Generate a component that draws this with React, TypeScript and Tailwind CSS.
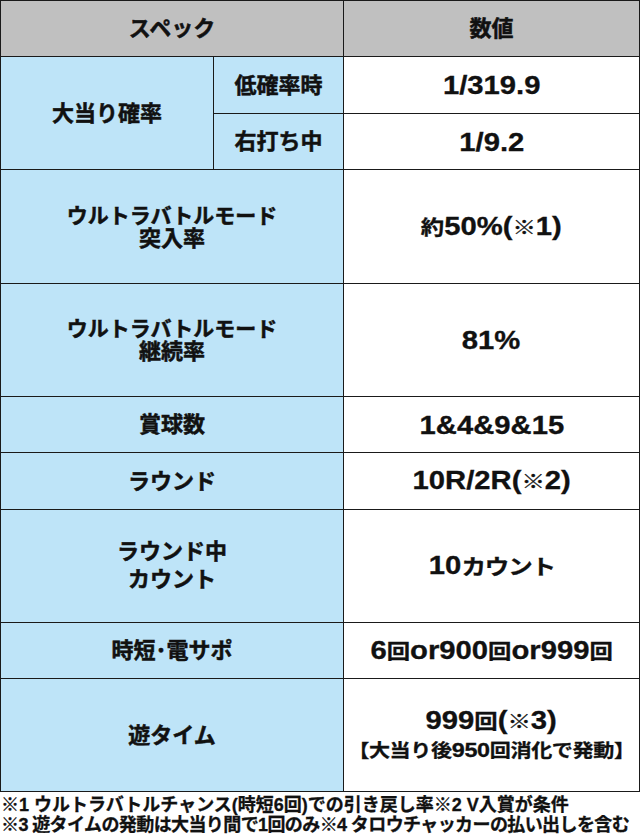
const font = { fontFamily: '"Liberation Sans", "Noto Sans CJK JP", sans-serif' };

const CJK = /[\u3000-\u30ff\u4e00-\u9fff\u203b\uff00-\uffef]/;
const RUNS = /[\u3000-\u30ff\u4e00-\u9fff\u203b\uff00-\uffef]+|[^\u3000-\u30ff\u4e00-\u9fff\u203b\uff00-\uffef]+/g;

// latin digits run large, japanese glyphs a bit smaller, whole line stretched wide like the source image
function Line({ text, cjk = "text-[20px]", className = "" }: { text: string; cjk?: string; className?: string }) {
  const parts = text.match(RUNS) ?? [];
  return (
    <span className={`inline-block scale-x-[1.17] whitespace-nowrap ${className}`}>
      {parts.map((p, i) =>
        CJK.test(p) ? (
          <span key={i} className={cjk}>
            {p}
          </span>
        ) : (
          <span key={i}>{p}</span>
        )
      )}
    </span>
  );
}

function Label({ children, className = "" }: { children: React.ReactNode; className?: string }) {
  return (
    <div
      className={`flex flex-col items-center justify-center bg-[#bee4f8] text-[22px] font-bold leading-[23px] text-[#111] [-webkit-text-stroke:0.5px_#111] ${className}`}
    >
      {children}
    </div>
  );
}

function Value({ children, className = "" }: { children: React.ReactNode; className?: string }) {
  return (
    <div
      className={`flex flex-col items-center justify-center bg-white text-[25px] font-bold leading-[28px] text-[#111] [-webkit-text-stroke:0.3px_#111] ${className}`}
    >
      {children}
    </div>
  );
}

export default function App() {
  return (
    <div className="w-[640px] bg-white" style={font}>
      <div className="grid grid-cols-[212px_129px_295px] grid-rows-[55px_56px_55px_113px_112px_55px_56px_112px_55px_112px] gap-px bg-[#1a1a1a] p-px">
        {/* header */}
        <div className="col-span-2 flex items-center justify-center bg-[#c0c0c0] text-[22px] font-bold text-[#111] [-webkit-text-stroke:0.5px_#111]">
          スペック
        </div>
        <div className="flex items-center justify-center bg-[#c0c0c0] text-[22px] font-bold text-[#111] [-webkit-text-stroke:0.5px_#111]">
          数値
        </div>

        {/* 大当り確率 */}
        <Label className="row-span-2">大当り確率</Label>
        <Label>低確率時</Label>
        <Value>
          <Line text="1/319.9" />
        </Value>
        <Label>右打ち中</Label>
        <Value>
          <Line text="1/9.2" />
        </Value>

        <Label className="col-span-2">
          <span className="text-[21px]">ウルトラバトルモード</span>
          <span>突入率</span>
        </Label>
        <Value>
          <Line text="約50%(※1)" />
        </Value>

        <Label className="col-span-2">
          <span className="text-[21px]">ウルトラバトルモード</span>
          <span>継続率</span>
        </Label>
        <Value>
          <Line text="81%" />
        </Value>

        <Label className="col-span-2">賞球数</Label>
        <Value>
          <Line text="1&4&9&15" />
        </Value>

        <Label className="col-span-2">ラウンド</Label>
        <Value>
          <Line text="10R/2R(※2)" />
        </Value>

        <Label className="col-span-2 leading-[28px]">
          <span>ラウンド中</span>
          <span>カウント</span>
        </Label>
        <Value>
          <Line text="10カウント" cjk="text-[21px] tracking-[-1px]" />
        </Value>

        <Label className="col-span-2">時短･電サポ</Label>
        <Value>
          <Line text="6回or900回or999回" />
        </Value>

        <Label className="col-span-2">遊タイム</Label>
        <Value>
          <Line text="999回(※3)" />
          <Line text="【大当り後950回消化で発動】" cjk="text-[18px]" className="text-[20px] tracking-[-0.3px]" />
        </Value>
      </div>

      <div className="px-[1px] pt-[3px] text-[18px] font-bold leading-[20px] text-[#111] whitespace-nowrap [-webkit-text-stroke:0.3px_#111]">
        <p>※1 ウルトラバトルチャンス(時短6回)での引き戻し率※2 V入賞が条件</p>
        <p className="tracking-[-0.6px]">※3 遊タイムの発動は大当り間で1回のみ※4 タロウチャッカーの払い出しを含む</p>
      </div>
    </div>
  );
}
